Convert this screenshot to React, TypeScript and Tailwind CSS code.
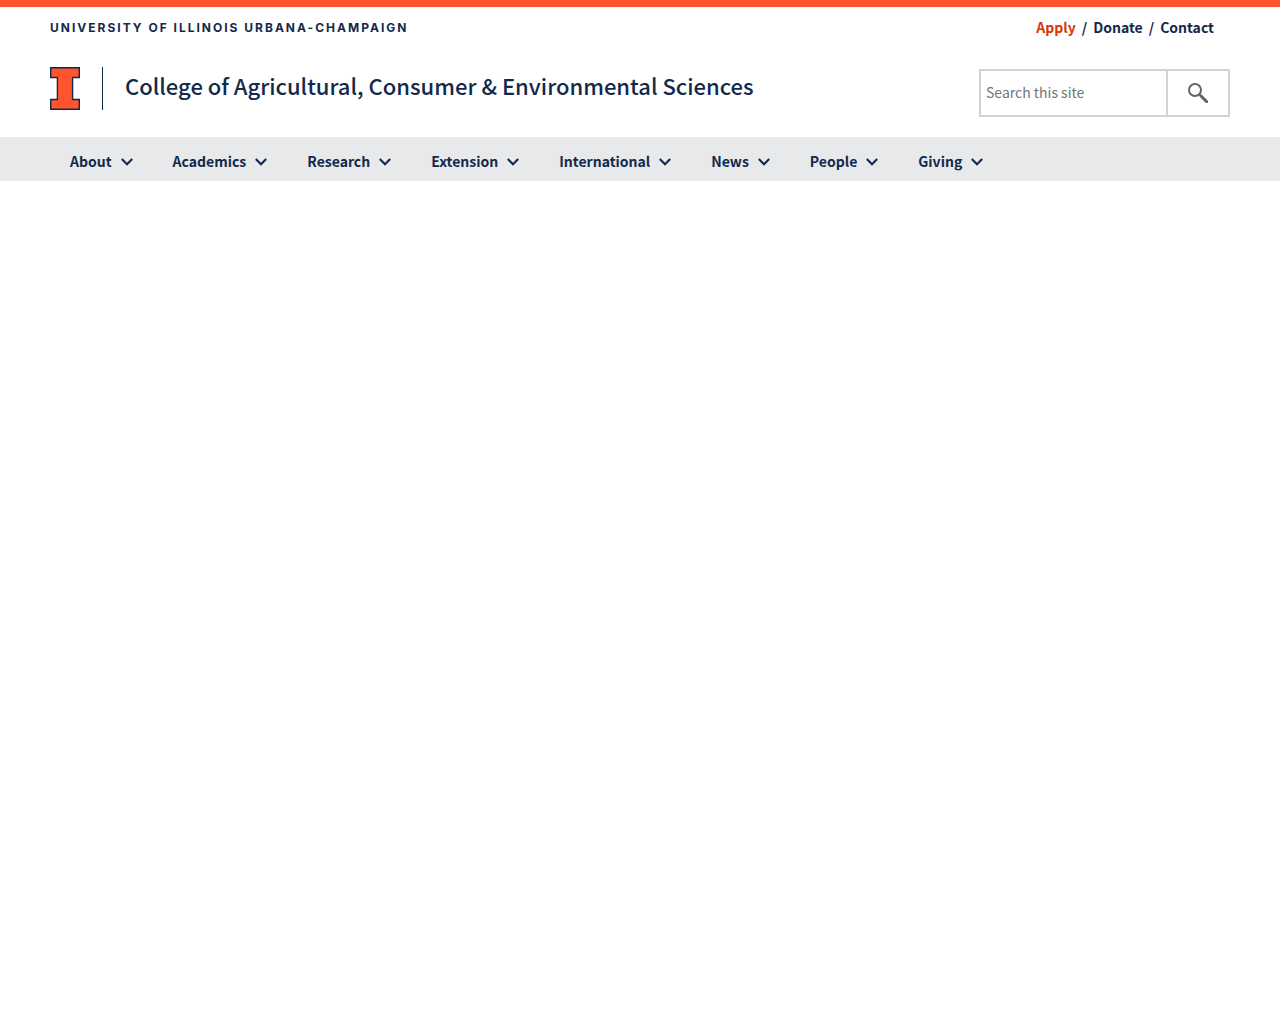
const navItems = ['About', 'Academics', 'Research', 'Extension', 'International', 'News', 'People', 'Giving'];

const utilityLinks = [
  { label: 'Apply', className: 'text-[#dd3403]' },
  { label: 'Donate', className: '' },
  { label: 'Contact', className: '' },
];

function BlockI() {
  return (
    <svg viewBox="0 0 30 43" className="h-[43px] w-[30px] shrink-0" aria-hidden="true">
      <path
        d="M.7 .7H29.3V10.5H22.6V32.5H29.3V42.3H.7V32.5H7.4V10.5H.7Z"
        fill="#ff552e"
        stroke="#13294b"
        strokeWidth="1.4"
      />
    </svg>
  );
}

function Chevron() {
  return (
    <svg viewBox="0 0 12 10" className="h-2.5 w-3 shrink-0" fill="none" aria-hidden="true">
      <path d="M.8 3L6 8.2L11.2 3" stroke="#13294b" strokeWidth="2.1" />
    </svg>
  );
}

function SearchIcon() {
  return (
    <svg viewBox="0 0 20 20" className="h-5 w-5" fill="none" stroke="#5e6669" aria-hidden="true">
      <circle cx="7" cy="7" r="6" strokeWidth="2" />
      <path d="M11.4 11.4L13.4 13.4" strokeWidth="2" />
      <path d="M13 13L18.6 18.6" strokeWidth="3" strokeLinecap="round" />
    </svg>
  );
}

export default function App() {
  return (
    <div className="min-h-screen bg-white font-['Noto_Sans_CJK_SC',sans-serif] text-[#13294b]">
      <header className="border-t-7 border-[#ff552e]">
        <div className="flex h-[42px] items-center justify-between pr-[66px] pl-[50px]">
          <a href="#university" className="font-['Inter',sans-serif] text-[12px] leading-4 font-bold tracking-[2px] uppercase">
            University of Illinois Urbana-Champaign
          </a>
          <ul className="flex pb-0.5 text-[14px] leading-5 font-bold">
            {utilityLinks.map((link, i) => (
              <li key={link.label} className="flex">
                {i > 0 && <span className="px-1.5">/</span>}
                <a href={`#${link.label.toLowerCase()}`} className={link.className}>
                  {link.label}
                </a>
              </li>
            ))}
          </ul>
        </div>
        <div className="flex items-start justify-between px-[50px] pt-[18px] pb-5">
          <div className="flex items-center">
            <a href="#illinois" aria-label="University of Illinois">
              <BlockI />
            </a>
            <a
              href="#home"
              className="ml-[22px] flex h-[43px] items-center border-l border-[#13294b] pb-2 pl-[22px] text-[22px] leading-8 font-medium"
            >
              College of Agricultural, Consumer &amp; Environmental Sciences
            </a>
          </div>
          <form role="search" className="mt-0.5 flex h-12 w-[251px] border-2 border-[#d2d2d2]">
            <input
              type="search"
              aria-label="Search this site"
              placeholder="Search this site"
              className="min-w-0 flex-1 px-[5px] pb-0.5 text-[14px] outline-none placeholder:text-[#757575]"
            />
            <button
              type="submit"
              aria-label="Search"
              className="flex w-[62px] items-center justify-center border-l-2 border-[#d2d2d2]"
            >
              <SearchIcon />
            </button>
          </form>
        </div>
        <nav aria-label="Main" className="bg-[#e8e9eb] px-[50px]">
          <ul className="flex">
            {navItems.map((item) => (
              <li key={item}>
                <button type="button" className="flex h-11 items-center gap-[9px] px-5 pt-1 text-[14px] leading-5 font-bold">
                  {item}
                  <Chevron />
                </button>
              </li>
            ))}
          </ul>
        </nav>
      </header>
    </div>
  );
}
